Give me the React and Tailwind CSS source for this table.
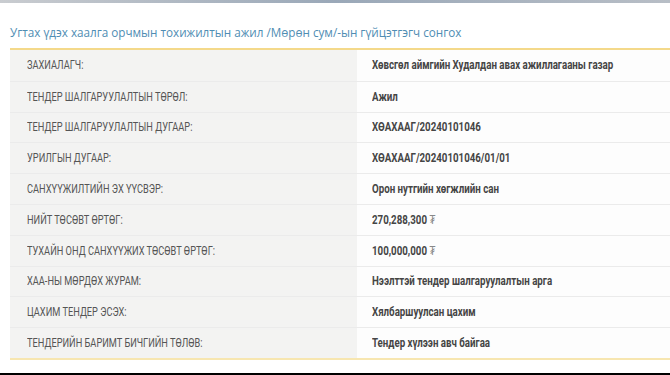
import React from 'react';

const rows = [
    ['ЗАХИАЛАГЧ:', 'Хөвсгөл аймгийн Худалдан авах ажиллагааны газар'],
    ['ТЕНДЕР ШАЛГАРУУЛАЛТЫН ТӨРӨЛ:', 'Ажил'],
    ['ТЕНДЕР ШАЛГАРУУЛАЛТЫН ДУГААР:', 'ХӨАХААГ/20240101046'],
    ['УРИЛГЫН ДУГААР:', 'ХӨАХААГ/20240101046/01/01'],
    ['САНХҮҮЖИЛТИЙН ЭХ ҮҮСВЭР:', 'Орон нутгийн хөгжлийн сан'],
    ['НИЙТ ТӨСӨВТ ӨРТӨГ:', '270,288,300', true],
    ['ТУХАЙН ОНД САНХҮҮЖИХ ТӨСӨВТ ӨРТӨГ:', '100,000,000', true],
    ['ХАА-НЫ МӨРДӨХ ЖУРАМ:', 'Нээлттэй тендер шалгаруулалтын арга'],
    ['ЦАХИМ ТЕНДЕР ЭСЭХ:', 'Хялбаршуулсан цахим'],
    ['ТЕНДЕРИЙН БАРИМТ БИЧГИЙН ТӨЛӨВ:', 'Тендер хүлээн авч байгаа'],
]

const App = () => {
    return (
        <div className="w-[670px] h-[375px] bg-white overflow-hidden flex flex-col" style={{ fontFamily: '"Roboto", sans-serif' }}>
            {/* banner edge */}
            <div className="h-[3px] w-full bg-gradient-to-r from-[#c9ccd0] via-[#9aa8b8] to-[#b8bec6]"></div>
            <div className="h-[20px]"></div>
            <h2 className="pl-[10px] text-[11.7px] leading-[18px] text-[#4f8db3] whitespace-nowrap" style={{ fontFamily: '"Open Sans", sans-serif' }}>
                Угтах үдэх хаалга орчмын тохижилтын ажил /Мөрөн сум/-ын гүйцэтгэгч сонгох
            </h2>
            <div className="h-[7px]"></div>
            <div className="ml-[10px] border-t-2 border-b-2 border-t-[#f4d98a] border-b-[#f7e6b0]">
                {rows.map((r, i) => (
                    <div key={i} className={`flex h-[30.8px] ${i > 0 ? 'border-t border-[#ebebeb]' : ''}`}>
                        <div className="w-[347px] shrink-0 bg-[#f3f3f2] pl-[17px] flex items-center text-[12px] text-[#555] whitespace-nowrap">
                            <span className="inline-block origin-left scale-x-[0.77]">{r[0]}</span>
                        </div>
                        <div className="flex-1 bg-[#fdfdfd] pl-[15px] flex items-center text-[12px] font-bold text-[#454545] whitespace-nowrap">
                            <span className="inline-block origin-left scale-x-[0.81]">
                                {r[1]}
                                {r[2] && <span className="font-normal text-[#888]"> ₮</span>}
                            </span>
                        </div>
                    </div>
                ))}
            </div>
            <div className="flex-1"></div>
            <div className="h-[2px] bg-black"></div>
        </div>
    )
}

export default App
